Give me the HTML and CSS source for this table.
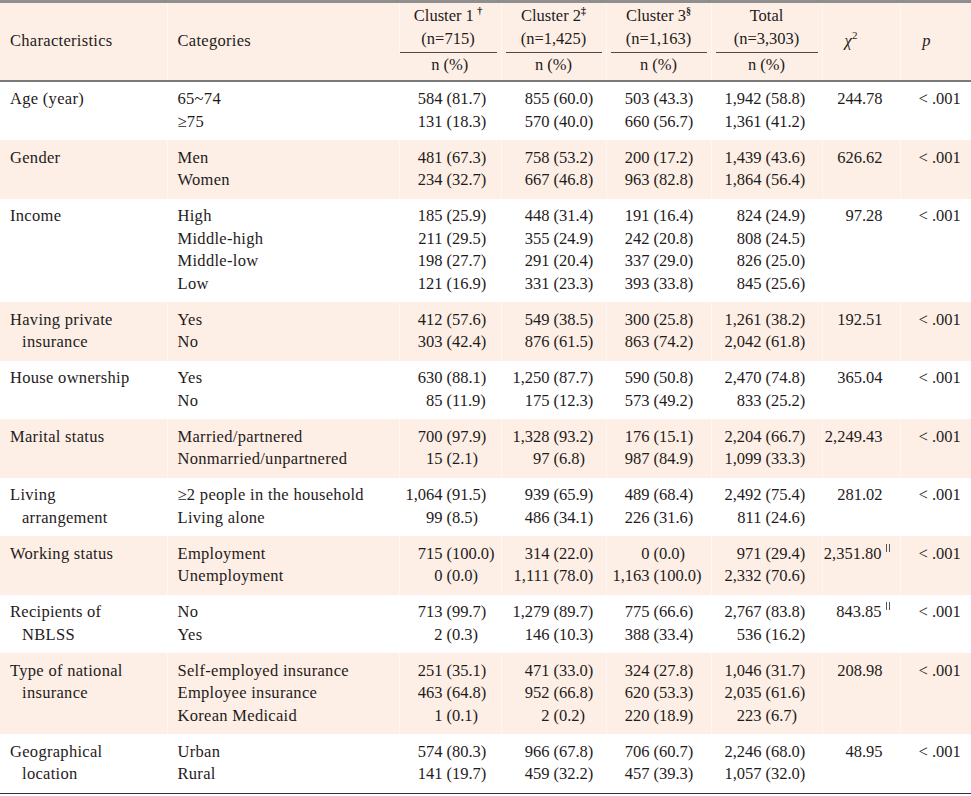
FILE: index.html
```html
<!DOCTYPE html>
<html lang="en">
<head>
<meta charset="utf-8">
<title>Characteristics by cluster</title>
<link rel="stylesheet" href="styles.css">
</head>
<body>
<table class="tbl">
  <colgroup>
    <col class="w-char"><col class="w-cat"><col class="w-c1"><col class="w-c2"><col class="w-c3"><col class="w-tot"><col class="w-chi"><col class="w-p">
  </colgroup>
  <thead>
    <tr class="h1">
      <th rowspan="2" class="th-left">Characteristics</th>
      <th rowspan="2" class="th-left">Categories</th>
      <th class="th-grp g-first"><div class="ul">Cluster 1&#8201;<sup class="mk">†</sup><br>(n=715)</div></th>
      <th class="th-grp"><div class="ul">Cluster 2<sup class="mk">‡</sup><br>(n=1,425)</div></th>
      <th class="th-grp"><div class="ul">Cluster 3<sup class="mk">§</sup><br>(n=1,163)</div></th>
      <th class="th-grp"><div class="ul">Total<br>(n=3,303)</div></th>
      <th rowspan="2" class="th-chi"><i>χ</i><sup class="sq">2</sup></th>
      <th rowspan="2" class="th-p"><i>p</i></th>
    </tr>
    <tr class="h2">
      <th class="th-np">n (%)</th>
      <th class="th-np">n (%)</th>
      <th class="th-np">n (%)</th>
      <th class="th-np">n (%)</th>
    </tr>
  </thead>
  <tbody>
    <tr>
      <td class="c-char"><div>Age (year)</div></td>
      <td class="c-cat"><div>65~74</div><div>≥75</div></td>
      <td class="c-num k1"><div class="v"><span class="n">584</span><span class="p">(81.7)</span></div><div class="v"><span class="n">131</span><span class="p">(18.3)</span></div></td>
      <td class="c-num k2"><div class="v"><span class="n">855</span><span class="p">(60.0)</span></div><div class="v"><span class="n">570</span><span class="p">(40.0)</span></div></td>
      <td class="c-num k3"><div class="v"><span class="n">503</span><span class="p">(43.3)</span></div><div class="v"><span class="n">660</span><span class="p">(56.7)</span></div></td>
      <td class="c-num kt"><div class="v"><span class="n">1,942</span><span class="p">(58.8)</span></div><div class="v"><span class="n">1,361</span><span class="p">(41.2)</span></div></td>
      <td class="c-chi">244.78</td>
      <td class="c-p">&lt; .001</td>
    </tr>
    <tr class="shade">
      <td class="c-char"><div>Gender</div></td>
      <td class="c-cat"><div>Men</div><div>Women</div></td>
      <td class="c-num k1"><div class="v"><span class="n">481</span><span class="p">(67.3)</span></div><div class="v"><span class="n">234</span><span class="p">(32.7)</span></div></td>
      <td class="c-num k2"><div class="v"><span class="n">758</span><span class="p">(53.2)</span></div><div class="v"><span class="n">667</span><span class="p">(46.8)</span></div></td>
      <td class="c-num k3"><div class="v"><span class="n">200</span><span class="p">(17.2)</span></div><div class="v"><span class="n">963</span><span class="p">(82.8)</span></div></td>
      <td class="c-num kt"><div class="v"><span class="n">1,439</span><span class="p">(43.6)</span></div><div class="v"><span class="n">1,864</span><span class="p">(56.4)</span></div></td>
      <td class="c-chi">626.62</td>
      <td class="c-p">&lt; .001</td>
    </tr>
    <tr>
      <td class="c-char"><div>Income</div></td>
      <td class="c-cat"><div>High</div><div>Middle-high</div><div>Middle-low</div><div>Low</div></td>
      <td class="c-num k1"><div class="v"><span class="n">185</span><span class="p">(25.9)</span></div><div class="v"><span class="n">211</span><span class="p">(29.5)</span></div><div class="v"><span class="n">198</span><span class="p">(27.7)</span></div><div class="v"><span class="n">121</span><span class="p">(16.9)</span></div></td>
      <td class="c-num k2"><div class="v"><span class="n">448</span><span class="p">(31.4)</span></div><div class="v"><span class="n">355</span><span class="p">(24.9)</span></div><div class="v"><span class="n">291</span><span class="p">(20.4)</span></div><div class="v"><span class="n">331</span><span class="p">(23.3)</span></div></td>
      <td class="c-num k3"><div class="v"><span class="n">191</span><span class="p">(16.4)</span></div><div class="v"><span class="n">242</span><span class="p">(20.8)</span></div><div class="v"><span class="n">337</span><span class="p">(29.0)</span></div><div class="v"><span class="n">393</span><span class="p">(33.8)</span></div></td>
      <td class="c-num kt"><div class="v"><span class="n">824</span><span class="p">(24.9)</span></div><div class="v"><span class="n">808</span><span class="p">(24.5)</span></div><div class="v"><span class="n">826</span><span class="p">(25.0)</span></div><div class="v"><span class="n">845</span><span class="p">(25.6)</span></div></td>
      <td class="c-chi">97.28</td>
      <td class="c-p">&lt; .001</td>
    </tr>
    <tr class="shade">
      <td class="c-char"><div>Having private</div><div class="ind">insurance</div></td>
      <td class="c-cat"><div>Yes</div><div>No</div></td>
      <td class="c-num k1"><div class="v"><span class="n">412</span><span class="p">(57.6)</span></div><div class="v"><span class="n">303</span><span class="p">(42.4)</span></div></td>
      <td class="c-num k2"><div class="v"><span class="n">549</span><span class="p">(38.5)</span></div><div class="v"><span class="n">876</span><span class="p">(61.5)</span></div></td>
      <td class="c-num k3"><div class="v"><span class="n">300</span><span class="p">(25.8)</span></div><div class="v"><span class="n">863</span><span class="p">(74.2)</span></div></td>
      <td class="c-num kt"><div class="v"><span class="n">1,261</span><span class="p">(38.2)</span></div><div class="v"><span class="n">2,042</span><span class="p">(61.8)</span></div></td>
      <td class="c-chi">192.51</td>
      <td class="c-p">&lt; .001</td>
    </tr>
    <tr>
      <td class="c-char"><div>House ownership</div></td>
      <td class="c-cat"><div>Yes</div><div>No</div></td>
      <td class="c-num k1"><div class="v"><span class="n">630</span><span class="p">(88.1)</span></div><div class="v"><span class="n">85</span><span class="p">(11.9)</span></div></td>
      <td class="c-num k2"><div class="v"><span class="n">1,250</span><span class="p">(87.7)</span></div><div class="v"><span class="n">175</span><span class="p">(12.3)</span></div></td>
      <td class="c-num k3"><div class="v"><span class="n">590</span><span class="p">(50.8)</span></div><div class="v"><span class="n">573</span><span class="p">(49.2)</span></div></td>
      <td class="c-num kt"><div class="v"><span class="n">2,470</span><span class="p">(74.8)</span></div><div class="v"><span class="n">833</span><span class="p">(25.2)</span></div></td>
      <td class="c-chi">365.04</td>
      <td class="c-p">&lt; .001</td>
    </tr>
    <tr class="shade">
      <td class="c-char"><div>Marital status</div></td>
      <td class="c-cat"><div>Married/partnered</div><div>Nonmarried/unpartnered</div></td>
      <td class="c-num k1"><div class="v"><span class="n">700</span><span class="p">(97.9)</span></div><div class="v"><span class="n">15</span><span class="p">(2.1)</span></div></td>
      <td class="c-num k2"><div class="v"><span class="n">1,328</span><span class="p">(93.2)</span></div><div class="v"><span class="n">97</span><span class="p">(6.8)</span></div></td>
      <td class="c-num k3"><div class="v"><span class="n">176</span><span class="p">(15.1)</span></div><div class="v"><span class="n">987</span><span class="p">(84.9)</span></div></td>
      <td class="c-num kt"><div class="v"><span class="n">2,204</span><span class="p">(66.7)</span></div><div class="v"><span class="n">1,099</span><span class="p">(33.3)</span></div></td>
      <td class="c-chi">2,249.43</td>
      <td class="c-p">&lt; .001</td>
    </tr>
    <tr>
      <td class="c-char"><div>Living</div><div class="ind">arrangement</div></td>
      <td class="c-cat"><div>≥2 people in the household</div><div>Living alone</div></td>
      <td class="c-num k1"><div class="v"><span class="n">1,064</span><span class="p">(91.5)</span></div><div class="v"><span class="n">99</span><span class="p">(8.5)</span></div></td>
      <td class="c-num k2"><div class="v"><span class="n">939</span><span class="p">(65.9)</span></div><div class="v"><span class="n">486</span><span class="p">(34.1)</span></div></td>
      <td class="c-num k3"><div class="v"><span class="n">489</span><span class="p">(68.4)</span></div><div class="v"><span class="n">226</span><span class="p">(31.6)</span></div></td>
      <td class="c-num kt"><div class="v"><span class="n">2,492</span><span class="p">(75.4)</span></div><div class="v"><span class="n">811</span><span class="p">(24.6)</span></div></td>
      <td class="c-chi">281.02</td>
      <td class="c-p">&lt; .001</td>
    </tr>
    <tr class="shade">
      <td class="c-char"><div>Working status</div></td>
      <td class="c-cat"><div>Employment</div><div>Unemployment</div></td>
      <td class="c-num k1"><div class="v"><span class="n">715</span><span class="p">(100.0)</span></div><div class="v"><span class="n">0</span><span class="p">(0.0)</span></div></td>
      <td class="c-num k2"><div class="v"><span class="n">314</span><span class="p">(22.0)</span></div><div class="v"><span class="n">1,111</span><span class="p">(78.0)</span></div></td>
      <td class="c-num k3"><div class="v"><span class="n">0</span><span class="p">(0.0)</span></div><div class="v"><span class="n">1,163</span><span class="p">(100.0)</span></div></td>
      <td class="c-num kt"><div class="v"><span class="n">971</span><span class="p">(29.4)</span></div><div class="v"><span class="n">2,332</span><span class="p">(70.6)</span></div></td>
      <td class="c-chi">2,351.80<span class="bar" title="‖"></span></td>
      <td class="c-p">&lt; .001</td>
    </tr>
    <tr>
      <td class="c-char"><div>Recipients of</div><div class="ind">NBLSS</div></td>
      <td class="c-cat"><div>No</div><div>Yes</div></td>
      <td class="c-num k1"><div class="v"><span class="n">713</span><span class="p">(99.7)</span></div><div class="v"><span class="n">2</span><span class="p">(0.3)</span></div></td>
      <td class="c-num k2"><div class="v"><span class="n">1,279</span><span class="p">(89.7)</span></div><div class="v"><span class="n">146</span><span class="p">(10.3)</span></div></td>
      <td class="c-num k3"><div class="v"><span class="n">775</span><span class="p">(66.6)</span></div><div class="v"><span class="n">388</span><span class="p">(33.4)</span></div></td>
      <td class="c-num kt"><div class="v"><span class="n">2,767</span><span class="p">(83.8)</span></div><div class="v"><span class="n">536</span><span class="p">(16.2)</span></div></td>
      <td class="c-chi">843.85<span class="bar" title="‖"></span></td>
      <td class="c-p">&lt; .001</td>
    </tr>
    <tr class="shade">
      <td class="c-char"><div>Type of national</div><div class="ind">insurance</div></td>
      <td class="c-cat"><div>Self-employed insurance</div><div>Employee insurance</div><div>Korean Medicaid</div></td>
      <td class="c-num k1"><div class="v"><span class="n">251</span><span class="p">(35.1)</span></div><div class="v"><span class="n">463</span><span class="p">(64.8)</span></div><div class="v"><span class="n">1</span><span class="p">(0.1)</span></div></td>
      <td class="c-num k2"><div class="v"><span class="n">471</span><span class="p">(33.0)</span></div><div class="v"><span class="n">952</span><span class="p">(66.8)</span></div><div class="v"><span class="n">2</span><span class="p">(0.2)</span></div></td>
      <td class="c-num k3"><div class="v"><span class="n">324</span><span class="p">(27.8)</span></div><div class="v"><span class="n">620</span><span class="p">(53.3)</span></div><div class="v"><span class="n">220</span><span class="p">(18.9)</span></div></td>
      <td class="c-num kt"><div class="v"><span class="n">1,046</span><span class="p">(31.7)</span></div><div class="v"><span class="n">2,035</span><span class="p">(61.6)</span></div><div class="v"><span class="n">223</span><span class="p">(6.7)</span></div></td>
      <td class="c-chi">208.98</td>
      <td class="c-p">&lt; .001</td>
    </tr>
    <tr class="last">
      <td class="c-char"><div>Geographical</div><div class="ind">location</div></td>
      <td class="c-cat"><div>Urban</div><div>Rural</div></td>
      <td class="c-num k1"><div class="v"><span class="n">574</span><span class="p">(80.3)</span></div><div class="v"><span class="n">141</span><span class="p">(19.7)</span></div></td>
      <td class="c-num k2"><div class="v"><span class="n">966</span><span class="p">(67.8)</span></div><div class="v"><span class="n">459</span><span class="p">(32.2)</span></div></td>
      <td class="c-num k3"><div class="v"><span class="n">706</span><span class="p">(60.7)</span></div><div class="v"><span class="n">457</span><span class="p">(39.3)</span></div></td>
      <td class="c-num kt"><div class="v"><span class="n">2,246</span><span class="p">(68.0)</span></div><div class="v"><span class="n">1,057</span><span class="p">(32.0)</span></div></td>
      <td class="c-chi">48.95</td>
      <td class="c-p">&lt; .001</td>
    </tr>
  </tbody>
</table>
</body>
</html>
```

FILE: styles.css
```css
html, body {
  margin: 0;
  padding: 0;
  background: #ffffff;
}

body {
  font-family: "Liberation Serif", "Times New Roman", serif;
  font-size: 16.5px;
  color: #1f1b1c;
}

.tbl {
  width: 971px;
  border-collapse: collapse;
  table-layout: fixed;
  line-height: 22.5px;
}

.w-char { width: 167px; }
.w-cat  { width: 232px; }
.w-c1   { width: 102px; }
.w-c2   { width: 105px; }
.w-c3   { width: 105px; }
.w-tot  { width: 111px; }
.w-chi  { width: 78px; }
.w-p    { width: 71px; }

thead {
  background: #fdefe5;
}

thead tr.h1 th {
  border-top: 3px solid #8f8f8f;
}

thead tr.h2 th,
thead tr.h1 th[rowspan] {
  border-bottom: 2px solid #7a7a7a;
}

th {
  font-weight: normal;
  padding: 0;
  border-left: 1px solid rgba(255, 255, 255, 0.45);
}

th:first-child {
  border-left: none;
}

.th-left {
  text-align: left;
  vertical-align: middle;
  padding-left: 10px;
  letter-spacing: 0.3px;
}

.th-grp {
  text-align: center;
  vertical-align: bottom;
  padding: 2px 0 0 0;
}

.th-grp .ul {
  margin: 0 4px;
  padding-bottom: 2px;
  border-bottom: 1px solid #4a4a4a;
}

.th-grp.g-first .ul {
  margin-left: 0;
}

.th-np {
  text-align: center;
  padding: 1px 0 3px 0;
}

.th-chi {
  text-align: center;
  padding-right: 20px;
  vertical-align: middle;
}

.th-p {
  text-align: center;
  padding-right: 19px;
  vertical-align: middle;
}

.mk {
  font-size: 10px;
  line-height: 0;
  vertical-align: 7px;
  font-weight: bold;
}

.sq {
  font-size: 11px;
  line-height: 0;
  vertical-align: 7px;
}

.bar {
  display: inline-block;
  width: 2px;
  height: 8px;
  margin-left: 4px;
  margin-right: -7px;
  vertical-align: 7px;
  border-left: 1px solid #555;
  border-right: 1px solid #555;
}

td {
  padding: 6.5px 0 7px 0;
  vertical-align: top;
  border-left: 1px solid transparent;
}

td:first-child {
  border-left: none;
}

tr.shade td {
  background: #fdefe5;
  border-left-color: rgba(255, 255, 255, 0.45);
}

tr.shade td:first-child {
  border-left: none;
}

tr.last td {
  border-bottom: 1.5px solid #333333;
}

.c-char {
  padding-left: 10px;
  letter-spacing: 0.3px;
}

.c-char .ind {
  padding-left: 12px;
}

.c-cat {
  padding-left: 10px;
  white-space: nowrap;
  letter-spacing: 0.3px;
}

.v {
  display: flex;
  white-space: nowrap;
}

.v .n {
  flex: none;
  text-align: right;
}

.v .p {
  margin-left: 4px;
}

.k1 .n { width: 43px; }
.k2 .n { width: 48px; }
.k3 .n { width: 43px; }
.kt .n { width: 50px; }

.c-chi {
  text-align: right;
  padding-right: 17px;
  white-space: nowrap;
}

.c-p {
  text-align: left;
  padding-left: 18px;
  white-space: nowrap;
}
```
